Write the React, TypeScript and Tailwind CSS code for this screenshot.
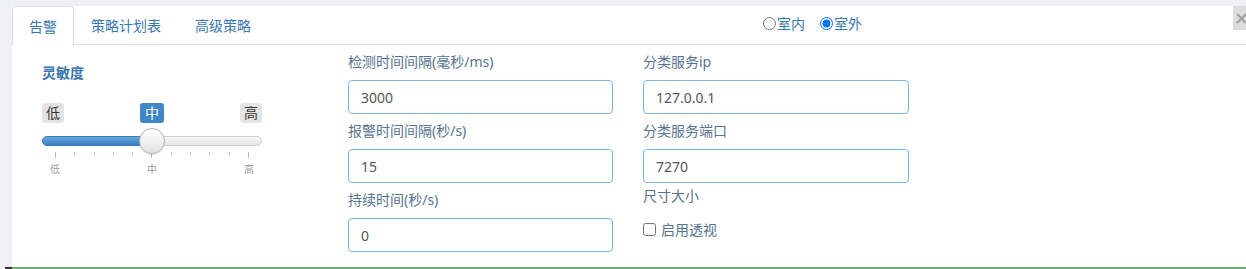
import React from "react";

const font = "font-['Noto_Sans','Noto_Sans_CJK_SC',sans-serif]";

function Field({ label, value, className = "" }: { label: string; value: string; className?: string }) {
  return (
    <div className={`flex flex-col ${className}`}>
      <div className="h-[20px] leading-[20px] text-[14px] text-[#56738f]">{label}</div>
      <input
        readOnly
        value={value}
        className="mt-[8px] h-[34px] w-full rounded-[4px] border border-[#7db5e2] bg-white pl-[12px] text-[14px] text-[#555] outline-none"
      />
    </div>
  );
}

function Sensitivity() {
  const ticks = Array.from({ length: 11 }, (_, i) => i);
  return (
    <div className="mt-[11px] flex w-[220px] flex-col">
      <div className="h-[20px] leading-[20px] text-[14px] font-semibold text-[#3a76ad]">灵敏度</div>
      <div className="mt-[20px] flex h-[20px] justify-between">
        <span className="rounded-[3px] bg-[#e4e4e4] px-[4px] text-[14px] leading-[20px] text-[#333]">低</span>
        <span className="rounded-[3px] bg-[#3f87c7] px-[5px] text-[14px] leading-[20px] text-white">中</span>
        <span className="rounded-[3px] bg-[#e4e4e4] px-[4px] text-[14px] leading-[20px] text-[#333]">高</span>
      </div>
      <div className="relative mt-[5px] h-[26px] w-[220px]">
        <div className="absolute inset-x-0 top-[8px] h-[10px] rounded-full border border-[#cfcfcf] bg-gradient-to-b from-[#f7f7f7] to-[#e4e4e4]" />
        <div className="absolute left-0 top-[8px] h-[10px] w-[112px] rounded-l-full border border-[#3a7fc0] bg-gradient-to-b from-[#68a8df] to-[#3b80c3]" />
        <div className="absolute left-[97px] top-0 h-[26px] w-[26px] rounded-full border border-[#b5b5b5] bg-gradient-to-b from-[#ffffff] to-[#e2e2e2] shadow-[0_1px_2px_rgba(0,0,0,0.15)]" />
      </div>
      <div className="-mt-[2px] flex h-[6px] items-start justify-between px-[13px]">
        {ticks.map((i) => (
          <span
            key={i}
            className={
              i === 0 || i === 5 || i === 10
                ? "h-[6px] w-px bg-[#9cc3e6]"
                : "h-[3px] w-px bg-[#c4c4c4]"
            }
          />
        ))}
      </div>
      <div className="mt-[6px] flex justify-between px-[8px] text-[10px] leading-[10px] text-[#999]">
        <span>低</span>
        <span>中</span>
        <span>高</span>
      </div>
    </div>
  );
}

export default function App() {
  return (
    <div className={`${font} flex h-[269px] w-[1246px] flex-col overflow-hidden bg-[#eef0f4]`}>
      <div className="flex flex-1 flex-col pl-[12px] pt-[6px]">
        <div className="relative flex flex-1 flex-col bg-white">
          {/* tab bar */}
          <div className="flex h-[39px] items-end border-b border-[#dddddd]">
            <div className="-mb-px flex h-[39px] items-center rounded-t-[4px] border border-b-0 border-[#dddddd] bg-white px-[16px] text-[14px] text-[#3a78b0]">
              告警
            </div>
            <div className="-mb-px flex h-[39px] items-center border border-transparent px-[16px] text-[14px] text-[#3a78b0]">
              策略计划表
            </div>
            <div className="-mb-px flex h-[39px] items-center border border-transparent px-[16px] text-[14px] text-[#3a78b0]">
              高级策略
            </div>
            <div className="mb-[10px] ml-[495px] flex items-center text-[14px] text-[#3a78b0]">
              <label className="flex items-center">
                <input type="radio" name="loc" className="m-0 mr-[1px] h-[13px] w-[13px]" />
                <span>室内</span>
              </label>
              <label className="ml-[15px] flex items-center">
                <input type="radio" name="loc" defaultChecked className="m-0 mr-[1px] h-[13px] w-[13px]" />
                <span>室外</span>
              </label>
            </div>
          </div>
          {/* close button */}
          <div className="absolute left-[1221px] top-0 flex h-[24px] w-[16px] items-center justify-center bg-[#dcdcdc]">
            <svg width="11" height="11" viewBox="0 0 11 11">
              <path d="M1 1L10 10M10 1L1 10" stroke="#a0a0a0" strokeWidth="2" />
            </svg>
          </div>
          {/* content */}
          <div className="flex items-start pl-[30px] pt-[7px]">
            <Sensitivity />
            <div className="ml-[86px] flex w-[265px] flex-col">
              <Field label="检测时间间隔(毫秒/ms)" value="3000" />
              <Field label="报警时间间隔(秒/s)" value="15" className="mt-[7px]" />
              <Field label="持续时间(秒/s)" value="0" className="mt-[7px]" />
            </div>
            <div className="ml-[30px] flex w-[266px] flex-col">
              <Field label="分类服务ip" value="127.0.0.1" />
              <Field label="分类服务端口" value="7270" className="mt-[7px]" />
              <div className="mt-[3px] h-[20px] text-[14px] leading-[20px] text-[#56738f]">尺寸大小</div>
              <label className="mt-[13px] flex h-[20px] items-center text-[14px] text-[#56738f]">
                <input type="checkbox" className="m-0 mr-[5px] h-[13px] w-[13px]" />
                <span>启用透视</span>
              </label>
            </div>
          </div>
        </div>
      </div>
      <div className="flex h-[2px]">
        <div className="w-[5px] bg-[#eef0f4]" />
        <div className="w-[7px] bg-[#333]" />
        <div className="flex-1 bg-[#74ae72]" />
      </div>
    </div>
  );
}
